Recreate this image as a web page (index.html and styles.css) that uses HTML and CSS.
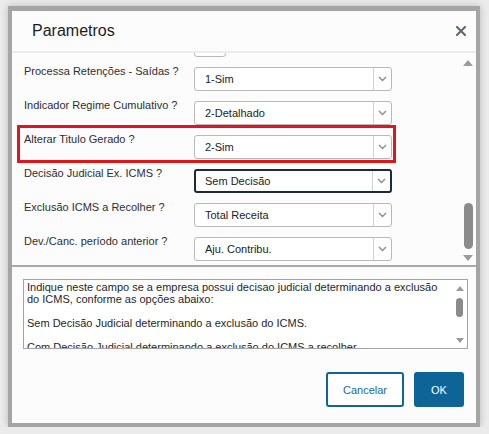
FILE: index.html
```html
<!DOCTYPE html>
<html lang="pt-BR">
<head>
<meta charset="utf-8">
<title>Parametros</title>
<link rel="stylesheet" href="styles.css">
</head>
<body>
<div class="dialog">
  <header class="dlg-head">
    <h1 class="dlg-title">Parametros</h1>
    <button class="dlg-close" type="button" aria-label="Fechar">
      <svg width="10" height="10" viewBox="0 0 10 10"><path d="M1 1L9 9M9 1L1 9" stroke="#5f656a" stroke-width="2" stroke-linecap="square" fill="none"/></svg>
    </button>
  </header>

  <div class="params">
    <div class="params-view">
      <div class="params-list">
        <div class="param">
          <span class="param-label"></span>
          <div class="select select--short"></div>
        </div>
        <div class="param">
          <span class="param-label">Processa Retenções - Saídas ?</span>
          <div class="select"><span class="select-value">1-Sim</span><span class="select-arrow"><svg width="9" height="6" viewBox="0 0 9 6"><path d="M1 1L4.5 4.5L8 1" stroke="#8c8c8c" stroke-width="1.4" fill="none"/></svg></span></div>
        </div>
        <div class="param">
          <span class="param-label">Indicador Regime Cumulativo ?</span>
          <div class="select"><span class="select-value">2-Detalhado</span><span class="select-arrow"><svg width="9" height="6" viewBox="0 0 9 6"><path d="M1 1L4.5 4.5L8 1" stroke="#8c8c8c" stroke-width="1.4" fill="none"/></svg></span></div>
        </div>
        <div class="param param--flag">
          <span class="param-label">Alterar Titulo Gerado ?</span>
          <div class="select"><span class="select-value">2-Sim</span><span class="select-arrow"><svg width="9" height="6" viewBox="0 0 9 6"><path d="M1 1L4.5 4.5L8 1" stroke="#8c8c8c" stroke-width="1.4" fill="none"/></svg></span></div>
        </div>
        <div class="param">
          <span class="param-label">Decisão Judicial Ex. ICMS ?</span>
          <div class="select select--focus"><span class="select-value">Sem Decisão</span><span class="select-arrow"><svg width="9" height="6" viewBox="0 0 9 6"><path d="M1 1L4.5 4.5L8 1" stroke="#8c8c8c" stroke-width="1.4" fill="none"/></svg></span></div>
        </div>
        <div class="param">
          <span class="param-label">Exclusão ICMS a Recolher ?</span>
          <div class="select"><span class="select-value">Total Receita</span><span class="select-arrow"><svg width="9" height="6" viewBox="0 0 9 6"><path d="M1 1L4.5 4.5L8 1" stroke="#8c8c8c" stroke-width="1.4" fill="none"/></svg></span></div>
        </div>
        <div class="param">
          <span class="param-label">Dev./Canc. período anterior ?</span>
          <div class="select"><span class="select-value">Aju. Contribu.</span><span class="select-arrow"><svg width="9" height="6" viewBox="0 0 9 6"><path d="M1 1L4.5 4.5L8 1" stroke="#8c8c8c" stroke-width="1.4" fill="none"/></svg></span></div>
        </div>
      </div>
    </div>
    <div class="vscroll">
      <span class="vscroll-up"></span>
      <span class="vscroll-track"><span class="vscroll-thumb"></span></span>
      <span class="vscroll-down"></span>
    </div>
  </div>

  <div class="help">
    <div class="help-box">
      <div class="help-text">
        Indique neste campo se a empresa possui decisao judicial determinando a exclusão<br>
        do ICMS, conforme as opções abaixo:<br>
        <br>
        Sem Decisão Judicial determinando a exclusão do ICMS.<br>
        <br>
        Com Decisão Judicial determinando a exclusão do ICMS a recolher.
      </div>
      <div class="vscroll vscroll--sm">
        <span class="vscroll-up"></span>
        <span class="vscroll-track"><span class="vscroll-thumb"></span></span>
        <span class="vscroll-down"></span>
      </div>
    </div>
  </div>

  <footer class="dlg-foot">
    <button class="btn btn--ghost" type="button">Cancelar</button>
    <button class="btn btn--primary" type="button">OK</button>
  </footer>
</div>
</body>
</html>
```

FILE: styles.css
```css
html, body {
  margin: 0;
  padding: 0;
}

body {
  background: #ebebeb;
  font-family: "Liberation Sans", Arial, sans-serif;
  color: #2b2b2b;
}

/* modal window */
.dialog {
  width: 464px;
  height: 412px;
  margin: 6px 0 0 8px;
  border: 4px solid #a5a5a5;
  border-top-width: 5px;
  background: #fcfcfc;
  box-shadow: 0 0 7px rgba(0, 0, 0, 0.22);
  display: flex;
  flex-direction: column;
}

.dlg-head {
  height: 40px;
  padding: 0 10px 0 20px;
  display: flex;
  align-items: center;
  justify-content: space-between;
  border-bottom: 2px solid #ececec;
}

.dlg-title {
  margin: 0;
  font-size: 16px;
  font-weight: normal;
  color: #1c1c1c;
}

.dlg-close {
  border: 0;
  padding: 0;
  margin: 0;
  background: none;
  width: 10px;
  height: 10px;
  display: flex;
}

/* parameter list */
.params {
  height: 212px;
  display: flex;
  overflow: hidden;
  border-bottom: 2px solid #a9a9a9;
}

.params-view {
  flex: 1;
  overflow: hidden;
  padding-left: 7px;
}

.params-list {
  margin-top: -28px;
}

.param {
  width: 375px;
  height: 34px;
  display: flex;
  box-sizing: border-box;
}

.param--flag {
  outline: 3px solid #e1151c;
  outline-offset: -1px;
}

.param-label {
  width: 175px;
  padding: 6px 0 0 5px;
  box-sizing: border-box;
  font-size: 11px;
  line-height: 13px;
  color: #2e2e2e;
}

.select {
  width: 198px;
  height: 24px;
  margin-top: 8px;
  box-sizing: border-box;
  border: 1px solid #b9b9b9;
  border-radius: 3px;
  background: #fff;
  display: flex;
  font-size: 11px;
  color: #222;
}

.select--short {
  width: 32px;
}

.select--focus {
  border: 2px solid #1e2a36;
}

.select-value {
  flex: 1;
  padding-left: 10px;
  line-height: 22px;
  white-space: nowrap;
}

.select--focus .select-value {
  padding-left: 9px;
  line-height: 20px;
}

.select-arrow {
  width: 17px;
  border-left: 1px solid #d2d2d2;
  display: flex;
  align-items: center;
  justify-content: center;
}

/* scrollbars */
.vscroll {
  width: 16px;
  padding: 7px 0 4px;
  box-sizing: border-box;
  display: flex;
  flex-direction: column;
  align-items: center;
}

.vscroll-up,
.vscroll-down {
  width: 0;
  height: 0;
  border-left: 5px solid transparent;
  border-right: 5px solid transparent;
}

.vscroll-up {
  border-bottom: 6px solid #9a9a9a;
}

.vscroll-down {
  border-top: 6px solid #9a9a9a;
}

.vscroll-track {
  flex: 1;
  display: flex;
  flex-direction: column;
  align-items: center;
}

.vscroll-thumb {
  width: 9px;
  height: 46px;
  margin-top: 137px;
  border-radius: 5px;
  background: #8b8b8b;
}

.vscroll--sm {
  width: 15px;
  padding: 6px 0 5px;
}

.vscroll--sm .vscroll-up,
.vscroll--sm .vscroll-down {
  border-left-width: 4.5px;
  border-right-width: 4.5px;
}

.vscroll--sm .vscroll-up {
  border-bottom-width: 5px;
}

.vscroll--sm .vscroll-down {
  border-top-width: 5px;
}

.vscroll--sm .vscroll-thumb {
  width: 7px;
  height: 19px;
  margin-top: 7px;
  border-radius: 4px;
}

/* help text */
.help {
  padding: 12px 8px 0 11px;
}

.help-box {
  height: 70px;
  box-sizing: border-box;
  border: 1px solid #a3a3a3;
  background: #fff;
  display: flex;
}

.help-text {
  flex: 1;
  padding: 1px 0 0 3px;
  overflow: hidden;
  white-space: nowrap;
  font-size: 11px;
  line-height: 12px;
  color: #262626;
}

/* footer buttons */
.dlg-foot {
  margin-top: auto;
  padding: 0 12px 16px 0;
  display: flex;
  justify-content: flex-end;
  gap: 10px;
}

.btn {
  height: 35px;
  box-sizing: border-box;
  border-radius: 3px;
  font-family: "Liberation Sans", Arial, sans-serif;
  font-size: 11px;
  padding: 0;
  cursor: pointer;
}

.btn--ghost {
  width: 78px;
  border: 2px solid #0e6596;
  background: #fff;
  color: #1a6a97;
}

.btn--primary {
  width: 50px;
  border: 0;
  background: #0c6497;
  color: #fff;
}
```
